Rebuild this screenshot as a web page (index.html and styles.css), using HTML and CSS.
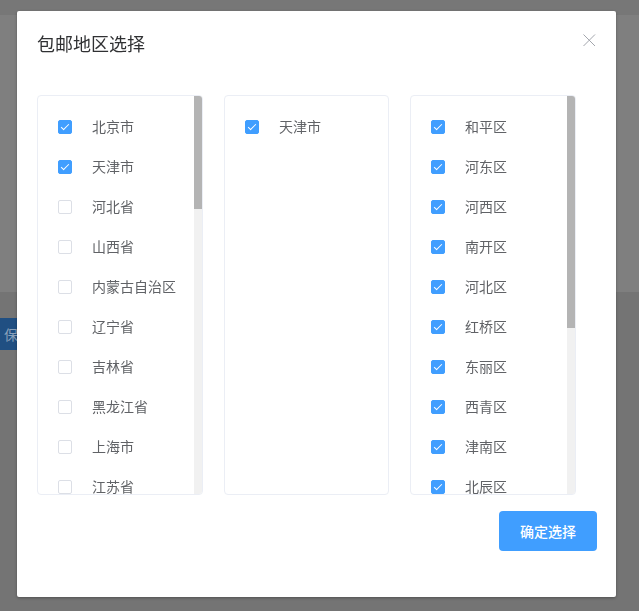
FILE: index.html
```html
<!DOCTYPE html>
<html lang="zh-CN">
<head>
  <meta charset="UTF-8" />
  <meta name="viewport" content="width=device-width, initial-scale=1.0"/>
  <title>包邮地区选择</title>
  <link rel="stylesheet" href="styles.css">
</head>
<body>
  <!-- page behind the dialog -->
  <div class="page-top"></div>
  <div class="page-main"></div>
  <div class="page-bottom">
    <button class="save-btn">保存</button>
  </div>

  <div class="mask">
    <div class="dialog">
      <div class="dialog-header">
        <span class="dialog-title">包邮地区选择</span>
        <svg class="close-icon" width="16" height="16" viewBox="0 0 16 16">
          <path d="M3.5 3.5 L15 15 M15 3.5 L3.5 15" stroke="#a3a6ad" stroke-width="1" fill="none"/>
        </svg>
      </div>

      <div class="dialog-body">
        <div class="region-box">
          <div class="region-list" id="provinceList"></div>
          <div class="scroll-bar"><div class="scroll-thumb"></div></div>
        </div>
        <div class="region-box middle">
          <div class="region-list" id="cityList"></div>
          <div class="scroll-bar"><div class="scroll-thumb"></div></div>
        </div>
        <div class="region-box">
          <div class="region-list" id="districtList"></div>
          <div class="scroll-bar"><div class="scroll-thumb"></div></div>
        </div>
      </div>

      <div class="dialog-footer">
        <button class="confirm-btn">确定选择</button>
      </div>
    </div>
  </div>

  <script>
    let provinces = ['北京市', '天津市', '河北省', '山西省', '内蒙古自治区', '辽宁省', '吉林省', '黑龙江省',
      '上海市', '江苏省', '浙江省', '安徽省', '福建省', '江西省', '山东省', '河南省', '湖北省', '湖南省',
      '广东省', '广西壮族自治区', '海南省', '重庆市', '四川省', '贵州省', '云南省', '西藏自治区', '陕西省',
      '甘肃省', '青海省', '宁夏回族自治区', '新疆维吾尔自治区', '台湾省', '香港特别行政区', '澳门特别行政区'];
    let cities = ['天津市'];
    let districts = ['和平区', '河东区', '河西区', '南开区', '河北区', '红桥区', '东丽区', '西青区',
      '津南区', '北辰区', '武清区', '宝坻区', '滨海新区', '宁河区', '静海区', '蓟州区'];

    function fillList(id, items, checked) {
      let list = document.getElementById(id);
      let html = '';
      items.forEach(name => {
        let on = checked.includes(name) ? ' is-checked' : '';
        html += `<label class="region-item"><span class="check-box${on}"></span><span class="region-name">${name}</span></label>`;
      });
      list.innerHTML = html;

      // fake scrollbar, thumb size from content height
      let bar = list.parentNode.querySelector('.scroll-bar');
      let thumb = bar.querySelector('.scroll-thumb');
      if (list.scrollHeight <= list.clientHeight) {
        bar.style.display = 'none';
      } else {
        thumb.style.height = Math.round(bar.clientHeight * list.clientHeight / list.scrollHeight) + 'px';
      }
    }

    fillList('provinceList', provinces, ['北京市', '天津市']);
    fillList('cityList', cities, cities);
    fillList('districtList', districts, districts);
  </script>
</body>
</html>
```

FILE: styles.css
```css
body {
  margin: 0;
  padding: 0;
  font-family: "Noto Sans CJK SC", "Noto Sans", sans-serif;
  background: #747474;
  height: 611px;
  overflow: hidden;
}

.page-top {
  height: 15px;
  background: #777777;
}

.page-main {
  height: 277px;
  background: #7f7f7f;
}

.page-bottom {
  padding-top: 26px;
}

.save-btn {
  display: block;
  width: 70px;
  height: 32px;
  padding: 0 0 0 4px;
  border: none;
  background: #204f82;
  color: #8aa1ba;
  font-family: inherit;
  font-size: 14px;
  text-align: left;
}

.mask {
  position: fixed;
  top: 0;
  left: 0;
  right: 0;
  bottom: 0;
}

.dialog {
  margin: 11px 0 0 17px;
  width: 599px;
  height: 586px;
  box-sizing: border-box;
  background: #fff;
  border-radius: 2px;
  box-shadow: 0 1px 3px rgba(0, 0, 0, 0.3);
}

.dialog-header {
  display: flex;
  justify-content: space-between;
  align-items: flex-start;
  padding: 20px 20px 10px;
}

.dialog-title {
  font-size: 18px;
  line-height: 24px;
  color: #303133;
}

.close-icon {
  display: block;
  margin-top: 0;
}

.dialog-body {
  display: flex;
  gap: 21px;
  padding: 30px 20px 0;
}

.region-box {
  position: relative;
  width: 166px;
  height: 400px;
  box-sizing: border-box;
  border: 1px solid #ebeef5;
  border-radius: 4px;
  overflow: hidden;
}

.region-box.middle {
  width: 165px;
}

.region-list {
  height: 100%;
  box-sizing: border-box;
  padding: 11px 0 32px 20px;
  overflow: hidden;
}

.scroll-bar {
  position: absolute;
  top: 0;
  right: 0;
  bottom: 0;
  width: 8px;
  background: #f1f1f1;
}

.scroll-thumb {
  background: #b4b4b4;
}

.region-item {
  display: flex;
  align-items: center;
  height: 40px;
  gap: 20px;
  cursor: pointer;
}

.check-box {
  position: relative;
  flex: none;
  width: 14px;
  height: 14px;
  box-sizing: border-box;
  border: 1px solid #dcdfe6;
  border-radius: 2px;
  background: #fff;
}

.check-box.is-checked {
  background: #409eff;
  border-color: #409eff;
}

.check-box.is-checked::after {
  content: "";
  position: absolute;
  left: 4px;
  top: 1px;
  width: 3px;
  height: 7px;
  border: 1px solid #fff;
  border-left: 0;
  border-top: 0;
  transform: rotate(45deg);
}

.region-name {
  font-size: 14px;
  line-height: 20px;
  margin-top: -2px;
  color: #606266;
  white-space: nowrap;
}

.dialog-footer {
  display: flex;
  justify-content: flex-end;
  padding: 16px 19px 0 20px;
}

.confirm-btn {
  width: 98px;
  height: 40px;
  border: none;
  border-radius: 4px;
  background: #409eff;
  color: #fff;
  font-family: inherit;
  font-size: 14px;
  font-weight: 500;
  cursor: pointer;
}
```
